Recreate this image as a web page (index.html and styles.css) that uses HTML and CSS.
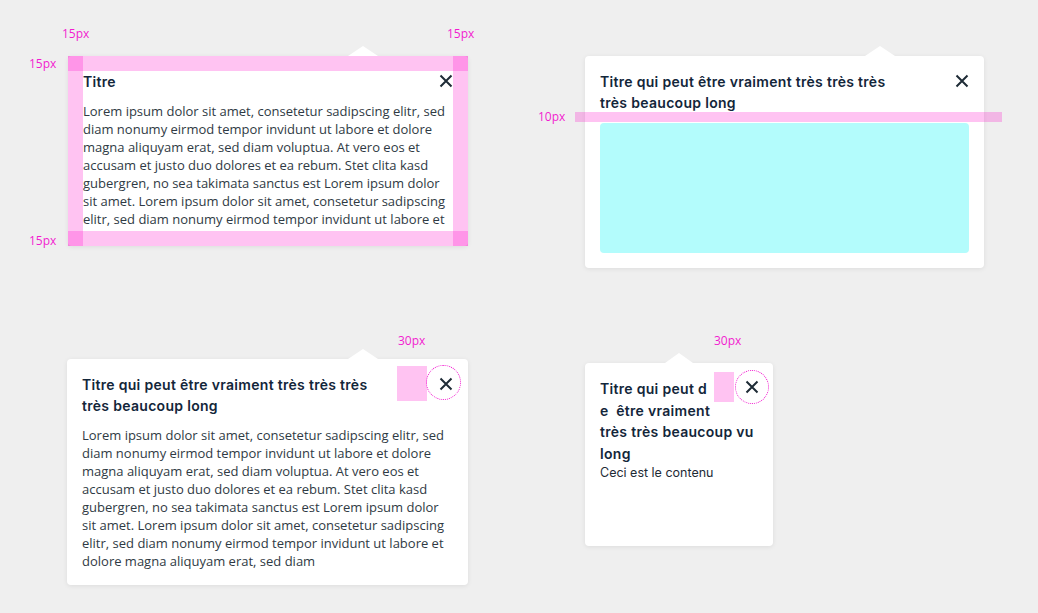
FILE: index.html
```html
<!DOCTYPE html>
<html lang="fr">
<head>
<meta charset="utf-8">
<title>Popovers</title>
<link rel="stylesheet" href="styles.css">
</head>
<body>
<main class="board">

  <section class="pop pop-1">
    <span class="notch"></span>
    <header class="pop-head">
      <h2 class="pop-title">Titre</h2>
      <button class="close" aria-label="Fermer"><svg viewBox="0 0 14 14" width="14" height="14"><path d="M1.5 1.5L12.5 12.5M12.5 1.5L1.5 12.5"/></svg></button>
    </header>
    <p class="pop-body">Lorem ipsum dolor sit amet, consetetur sadipscing elitr, sed diam nonumy eirmod tempor invidunt ut labore et dolore magna aliquyam erat, sed diam voluptua. At vero eos et accusam et justo duo dolores et ea rebum. Stet clita kasd gubergren, no sea takimata sanctus est Lorem ipsum dolor sit amet. Lorem ipsum dolor sit amet, consetetur sadipscing elitr, sed diam nonumy eirmod tempor invidunt ut labore et</p>
    <div class="guide">
      <span class="strip strip-top"></span>
      <span class="strip strip-bottom"></span>
      <span class="strip strip-left"></span>
      <span class="strip strip-right"></span>
    </div>
    <span class="dim dim-1a">15px</span>
    <span class="dim dim-1b">15px</span>
    <span class="dim dim-1c">15px</span>
    <span class="dim dim-1d">15px</span>
  </section>

  <section class="pop pop-2">
    <span class="notch"></span>
    <header class="pop-head">
      <h2 class="pop-title">Titre qui peut être vraiment très très très<br>très beaucoup long</h2>
      <button class="close" aria-label="Fermer"><svg viewBox="0 0 14 14" width="14" height="14"><path d="M1.5 1.5L12.5 12.5M12.5 1.5L1.5 12.5"/></svg></button>
    </header>
    <div class="slot"></div>
    <span class="band"></span>
    <span class="dim dim-2">10px</span>
  </section>

  <section class="pop pop-3">
    <span class="notch"></span>
    <header class="pop-head">
      <h2 class="pop-title">Titre qui peut être vraiment très très très<br>très beaucoup long</h2>
      <button class="close" aria-label="Fermer">
        <svg viewBox="0 0 14 14" width="14" height="14"><path d="M1.5 1.5L12.5 12.5M12.5 1.5L1.5 12.5"/></svg>
        <span class="gap-mark gap-lg"><span class="dim dim-3">30px</span></span>
        <span class="hit hit-lg"></span>
      </button>
    </header>
    <p class="pop-body">Lorem ipsum dolor sit amet, consetetur sadipscing elitr, sed diam nonumy eirmod tempor invidunt ut labore et dolore magna aliquyam erat, sed diam voluptua. At vero eos et accusam et justo duo dolores et ea rebum. Stet clita kasd gubergren, no sea takimata sanctus est Lorem ipsum dolor sit amet. Lorem ipsum dolor sit amet, consetetur sadipscing elitr, sed diam nonumy eirmod tempor invidunt ut labore et dolore magna aliquyam erat, sed diam</p>
  </section>

  <section class="pop pop-4">
    <span class="notch"></span>
    <header class="pop-head">
      <h2 class="pop-title">Titre qui peut d<br>e&nbsp; être vraiment<br>très très beaucoup vu<br>long</h2>
      <button class="close" aria-label="Fermer">
        <svg viewBox="0 0 14 14" width="14" height="14"><path d="M1.5 1.5L12.5 12.5M12.5 1.5L1.5 12.5"/></svg>
        <span class="gap-mark gap-sm"><span class="dim dim-4">30px</span></span>
        <span class="hit hit-sm"></span>
      </button>
    </header>
    <p class="pop-text">Ceci est le contenu</p>
  </section>

</main>
</body>
</html>
```

FILE: styles.css
```css
* { box-sizing: border-box; }

html, body {
  margin: 0;
  padding: 0;
  background: #efefef;
}

body {
  width: 1038px;
  height: 613px;
  overflow: hidden;
  font-family: "Open Sans", "Liberation Sans", sans-serif;
}

.board {
  display: grid;
  grid-template-columns: 400px 399px;
  column-gap: 117px;
  row-gap: 91px;
  align-items: start;
  padding: 56px 0 0 68px;
}

.pop {
  position: relative;
  background: #ffffff;
  border-radius: 4px;
  box-shadow: 0 1px 5px rgba(0, 0, 0, 0.08);
  padding: 15px;
  display: flex;
  flex-direction: column;
}

.notch {
  position: absolute;
  top: -10px;
  left: 280px;
  width: 0;
  height: 0;
  border-left: 15px solid transparent;
  border-right: 15px solid transparent;
  border-bottom: 10px solid #ffffff;
}

.pop-head {
  display: flex;
  align-items: flex-start;
  justify-content: space-between;
}

.pop-title {
  margin: 0;
  font-family: "Inter", "Noto Sans", sans-serif;
  font-weight: 600;
  font-size: 14px;
  line-height: 21px;
  letter-spacing: 0.3px;
  color: #13263a;
  white-space: nowrap;
}

.close {
  position: relative;
  flex: none;
  width: 14px;
  height: 14px;
  margin-top: 3px;
  padding: 0;
  border: 0;
  background: none;
  display: block;
}

.close svg {
  display: block;
  fill: none;
  stroke: #1e2b36;
  stroke-width: 2;
}

.pop-body {
  margin: 10px 0 0;
  font-size: 13px;
  line-height: 18px;
  color: #2f3a44;
}

/* card 1 */
.pop-1 {
  height: 190px;
}

.guide {
  position: absolute;
  inset: 0;
  pointer-events: none;
}

.strip {
  position: absolute;
  background: rgba(255, 0, 200, 0.235);
}

.strip-top { top: 0; left: 0; right: 0; height: 15px; }
.strip-bottom { bottom: 0; left: 0; right: 0; height: 15px; }
.strip-left { top: 0; bottom: 0; left: 0; width: 15px; }
.strip-right { top: 0; bottom: 0; right: 0; width: 15px; }

.dim {
  position: absolute;
  font-family: "Open Sans", "Liberation Sans", sans-serif;
  font-size: 12px;
  line-height: 16px;
  letter-spacing: 0;
  font-weight: 400;
  color: #f21cd0;
  white-space: nowrap;
}

.dim-1a { left: -6px; top: -30px; }
.dim-1b { left: 379px; top: -30px; }
.dim-1c { left: -39px; top: 0; }
.dim-1d { left: -39px; top: 177px; }

/* card 2 */
.slot {
  margin-top: 10px;
  height: 130px;
  background: #b3fcfc;
  border-radius: 4px;
}

.band {
  position: absolute;
  left: -10px;
  right: -18px;
  top: 56px;
  height: 10px;
  background: rgba(255, 0, 200, 0.235);
}

.dim-2 { left: -47px; top: 53px; }

/* card 3 */
.pop-3 {
  margin-left: -1px;
}

.pop-3 .notch { left: 281px; }

.gap-mark {
  position: absolute;
  background: rgba(255, 0, 200, 0.235);
}

.gap-lg {
  left: -42px;
  top: -11px;
  width: 30px;
  height: 35px;
}

.gap-sm {
  left: -31px;
  top: -8px;
  width: 20px;
  height: 30px;
}

.hit {
  position: absolute;
  border: 1px dotted #f21cd0;
  border-radius: 50%;
}

.hit-lg {
  left: -13px;
  top: -12px;
  width: 35px;
  height: 35px;
}

.hit-sm {
  left: -10px;
  top: -10px;
  width: 34px;
  height: 34px;
}

.dim-3 { left: 1px; top: -33px; }
.dim-4 { left: 0; top: -39px; }

/* card 4 */
.pop-4 {
  width: 188px;
  height: 183px;
  margin-top: 4px;
}

.pop-4 .notch { left: 80px; border-left-width: 14px; border-right-width: 14px; }

.pop-4 .pop-title {
  flex: 1 1 auto;
  min-width: 0;
  line-height: 21.5px;
}

.pop-4 .close { margin-top: 2px; margin-right: -1px; }

.pop-text {
  margin: 0;
  font-family: "Inter", "Noto Sans", sans-serif;
  font-size: 12.5px;
  line-height: 18px;
  color: #1e2b36;
}
```
